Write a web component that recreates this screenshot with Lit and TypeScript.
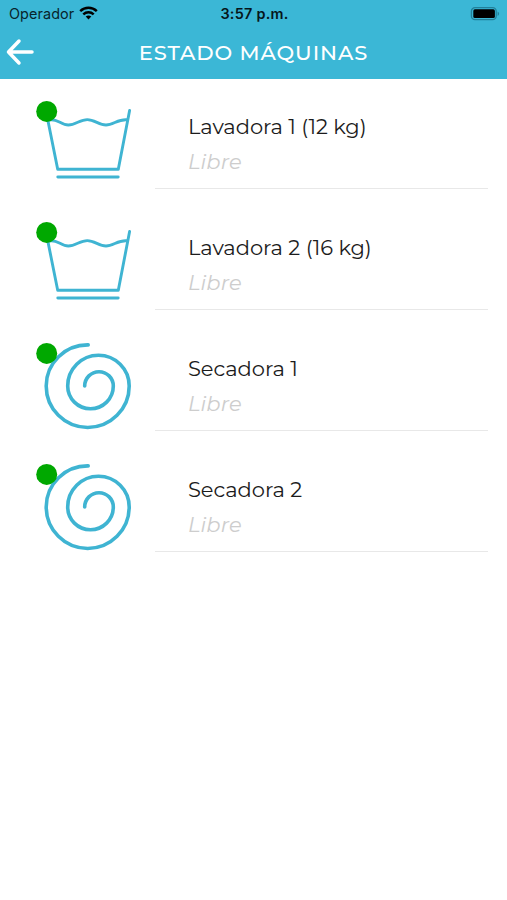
import { LitElement, html, css, svg } from "lit";
import { customElement, property } from "lit/decorators.js";

type Kind = "washer" | "dryer";

interface Machine {
  name: string;
  state: string;
  kind: Kind;
}

const MACHINES: Machine[] = [
  { name: "Lavadora 1 (12 kg)", state: "Libre", kind: "washer" },
  { name: "Lavadora 2 (16 kg)", state: "Libre", kind: "washer" },
  { name: "Secadora 1", state: "Libre", kind: "dryer" },
  { name: "Secadora 2", state: "Libre", kind: "dryer" },
];

@customElement("machine-icon")
export class MachineIcon extends LitElement {
  @property() kind: Kind = "washer";

  static styles = css`
    :host { display: block; width: 155px; height: 110px; }
    svg { display: block; }
    .line { fill: none; stroke: #3fb4d2; stroke-width: 2.9; stroke-linecap: round; stroke-linejoin: round; }
    .spiral { stroke-width: 3.6; }
    .dot { fill: #00a800; }
  `;

  render() {
    const shape =
      this.kind === "washer"
        ? svg`
          <path class="line" d="M46 32L57.7 90.3H118.3L129.6 31.5" />
          <path class="line" d="M57.8 98H118.2" />
          <path class="line" d="M49 41C57 39 61 46 68.3 46S80 40.6 87.3 40.6S99 46 106 46S118 40.2 126.5 40.8" />`
        : svg`
          <path class="line spiral"
            d="M88.2 23.9A41.5 41.1 0 0 0 46.2 65A41.5 41.5 0 0 0 129.2 65A30.75 30.75 0 0 0 67.7 65A22.8 22.8 0 0 0 113.3 65A14.3 14.3 0 0 0 84.7 65" />`;
    return html`<svg width="155" height="110" viewBox="0 0 155 110">
      ${shape}
      <circle class="dot" cx="46.7" cy="32.4" r="10.5" />
    </svg>`;
  }
}

@customElement("status-bar")
export class StatusBar extends LitElement {
  static styles = css`
    :host {
      display: grid; grid-template-columns: 1fr auto 1fr; align-items: center;
      height: 27px; padding: 0 7px 0 9px; box-sizing: border-box;
      font: 14.4px/27px Inter, sans-serif; color: #08242c;
    }
    .carrier { display: flex; align-items: center; gap: 5px; letter-spacing: 0.1px; }
    .time { font-weight: 600; color: #06161b; letter-spacing: 0.25px; }
    .battery { justify-self: end; }
    svg { display: block; }
    .wifi { margin-top: -2px; }
  `;

  render() {
    return html`
      <div class="carrier">
        <span>Operador</span>
        <svg class="wifi" width="19" height="14" viewBox="0 0 19 14" fill="none" stroke="#000" stroke-width="2.5">
          <path d="M1.2 5.1C6 .6 13 .6 17.8 5.1" />
          <path d="M4.3 8.3C7.3 5.5 11.7 5.5 14.7 8.3" />
          <path d="M6.7 10.6C8.4 9.1 10.6 9.1 12.3 10.6L9.5 13.5Z" fill="#000" stroke="none" />
        </svg>
      </div>
      <div class="time">3:57 p.m.</div>
      <svg class="battery" width="30" height="14" viewBox="0 0 30 14">
        <rect x="1.4" y="0.7" width="24.8" height="12" rx="3.6" fill="none" stroke="#22809a" stroke-width="1.3" />
        <rect x="3.3" y="2.3" width="21.6" height="8.8" rx="1.6" fill="#000" />
        <path d="M27.6 4.6C29.6 5.4 29.6 8.2 27.6 9Z" fill="#22809a" />
      </svg>
    `;
  }
}

@customElement("app-root")
export class AppRoot extends LitElement {
  static styles = css`
    :host {
      display: flex; flex-direction: column; height: 900px; background: #fff;
      font-family: Montserrat, Inter, sans-serif; overflow: hidden;
    }
    .top { background: #3bb7d6; height: 79px; flex: none; }
    .nav {
      display: grid; grid-template-columns: 40px 1fr 40px; align-items: start;
      height: 50px; color: #fff;
    }
    .back { display: block; margin: 11px 0 0 5px; }
    .title {
      margin: 0; padding-top: 1px; text-align: center; font-size: 21px; font-weight: 500;
      line-height: 50px; letter-spacing: 0.9px; white-space: nowrap;
    }
    .list { display: flex; flex-direction: column; gap: 11px; }
    .row { display: flex; height: 110px; }
    .info {
      width: 333px; box-sizing: border-box; padding: 33px 0 0 33px;
      border-bottom: 1.5px solid #e8e8e8; white-space: nowrap;
    }
    .name { font-size: 21px; line-height: 30px; letter-spacing: -0.05px; color: #1c1c1c; }
    .state {
      margin-top: 5px; font-size: 21px; line-height: 30px; font-style: italic;
      color: #cdcdcd; letter-spacing: 0.15px;
    }
  `;

  render() {
    return html`
      <header class="top">
        <status-bar></status-bar>
        <div class="nav">
          <svg class="back" width="30" height="28" viewBox="0 0 30 28" fill="none"
            stroke="#fff" stroke-width="3.5" stroke-linecap="round" stroke-linejoin="round">
            <path d="M27 14H3.5M14 3L3.5 14L14 25" />
          </svg>
          <h1 class="title">ESTADO MÁQUINAS</h1>
        </div>
      </header>
      <main class="list">
        ${MACHINES.map(
          (m) => html`<section class="row">
            <machine-icon .kind=${m.kind}></machine-icon>
            <div class="info">
              <div class="name">${m.name}</div>
              <div class="state">${m.state}</div>
            </div>
          </section>`,
        )}
      </main>
    `;
  }
}
